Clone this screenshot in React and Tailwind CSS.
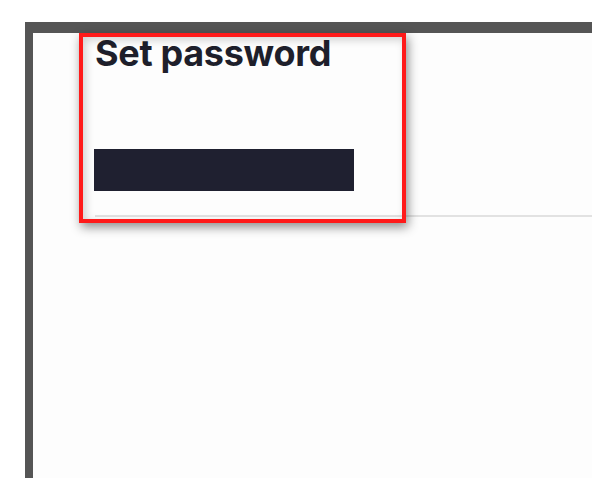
export default function App() {
  return (
    <div className="relative w-[600px] h-[499px] bg-white overflow-hidden" style={{ fontFamily: "Inter, 'Liberation Sans', sans-serif" }}>
      <div className="ml-[25px] mt-[22px] w-[567px] h-[456px] border-t-[11px] border-l-[8px] border-[#555555] bg-[#fdfdfd]">
        <div className="ml-[62px] h-[184px] border-b-2 border-[#e2e2e2] flex flex-col">
          <h1 className="mt-0 text-[36px] leading-[40px] font-bold text-[#1e1f2b] tracking-[-0.3px]">Set password</h1>
          <div className="mt-[76px] ml-[-1px] w-[260px] h-[42px] bg-[#1f2030]" />
        </div>
      </div>
      {/* highlight annotation */}
      <div className="absolute left-[79px] top-[33px] w-[327px] h-[190px] border-4 border-[#ff1a1a] shadow-[2px_4px_10px_rgba(0,0,0,0.45),inset_3px_3px_8px_rgba(0,0,0,0.18)]" />
    </div>
  );
}
